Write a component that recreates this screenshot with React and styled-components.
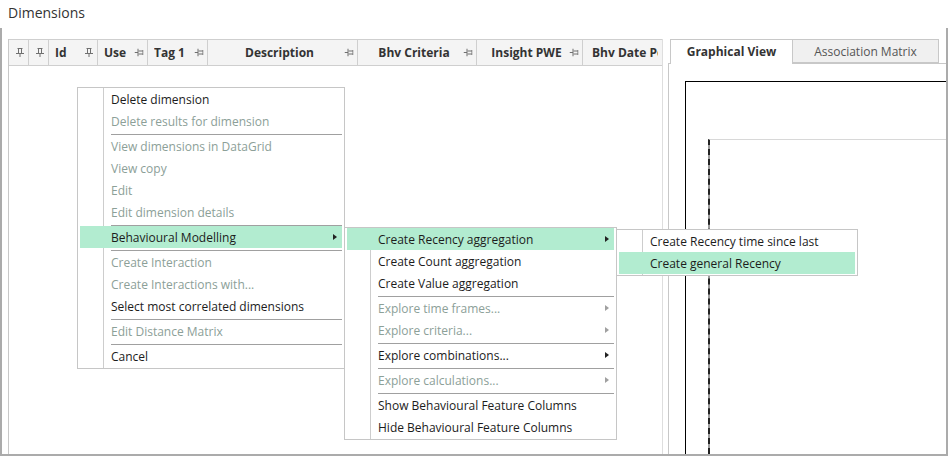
import React from 'react';
import styled, { createGlobalStyle } from 'styled-components';

const GlobalStyle = createGlobalStyle`
  html, body { margin: 0; padding: 0; background: #fff; }
  body {
    font-family: "Open Sans", "Noto Sans", "Liberation Sans", sans-serif;
    font-size: 12px;
    color: #1c1c1c;
  }
  * { box-sizing: border-box; }
`;

const Window = styled.div`
  position: relative;
  width: 948px;
  height: 456px;
  overflow: hidden;
  display: flex;
  flex-direction: column;
  background: #fff;
`;

const TitleBar = styled.div`
  height: 28px;
  flex: none;
  padding-left: 8px;
  font-size: 14px;
  line-height: 25px;
  color: #333;
`;

const Frame = styled.div`
  flex: 1;
  min-height: 0;
  display: flex;
  border: 2px solid #ababab;
  border-top: none;
  padding: 11px 0 0 6px;
  overflow: hidden;
`;

const Grid = styled.div`
  width: 655px;
  flex: none;
  display: flex;
  flex-direction: column;
  border-left: 1px solid #c8c8c8;
  border-right: 1px solid #dedede;
`;

const HeaderRow = styled.div`
  display: flex;
  height: 27px;
  background: #f4f4f4;
  border-top: 1px solid #cfcfcf;
  border-bottom: 1px solid #cfcfcf;
`;

const HeaderCell = styled.div`
  flex: ${p => (p.$width ? `0 0 ${p.$width}px` : '1 1 0')};
  min-width: 0;
  display: flex;
  align-items: center;
  padding: 0 4px 0 ${p => p.$pl ?? 6}px;
  border-right: ${p => (p.$last ? 'none' : '1px solid #cfcfcf')};
  overflow: hidden;
`;

const HeaderLabel = styled.span`
  flex: 1;
  min-width: 0;
  font-weight: 700;
  color: #333;
  white-space: nowrap;
  text-align: ${p => p.$align || 'left'};
  overflow: hidden;
`;

const PinSvg = styled.svg`
  flex: none;
  color: #707070;
  transform: ${p => (p.$horizontal ? 'rotate(90deg)' : 'none')};
`;

const Pin = ({ horizontal }) => (
  <PinSvg width="8" height="9" viewBox="0 0 8 9" $horizontal={horizontal}>
    <line x1="1.5" y1="0.5" x2="6.5" y2="0.5" stroke="currentColor" />
    <line x1="2.5" y1="0.5" x2="2.5" y2="5" stroke="currentColor" />
    <line x1="5.5" y1="0.5" x2="5.5" y2="5" stroke="currentColor" />
    <line x1="0" y1="5.5" x2="8" y2="5.5" stroke="currentColor" />
    <line x1="4" y1="5.5" x2="4" y2="9" stroke="currentColor" />
  </PinSvg>
);

const GridBody = styled.div`
  flex: 1;
  background: #fff;
`;

const RightPanel = styled.div`
  flex: 1;
  min-width: 0;
  margin-left: 5px;
  display: flex;
  flex-direction: column;
`;

const TabStrip = styled.div`
  height: 24px;
  flex: none;
  display: flex;
  align-items: flex-start;
  padding-left: 2px;
`;

const Tab = styled.div`
  position: relative;
  z-index: 1;
  width: ${p => p.$width}px;
  height: ${p => (p.$active ? 25 : 24)}px;
  border: 1px solid #c8c8c8;
  border-left: ${p => (p.$active ? '1px solid #c8c8c8' : 'none')};
  border-bottom: ${p => (p.$active ? 'none' : '1px solid #c8c8c8')};
  background: ${p => (p.$active ? '#fff' : '#f0f0f0')};
  font-weight: ${p => (p.$active ? 700 : 400)};
  color: ${p => (p.$active ? '#333' : '#555')};
  text-align: center;
  line-height: 23px;
  white-space: nowrap;
`;

const ContentPanel = styled.div`
  flex: 1;
  display: flex;
  border-left: 1px solid #c8c8c8;
  border-top: 1px solid #c8c8c8;
  padding: 17px 0 0 16px;
`;

const ChartBox = styled.div`
  flex: 1;
  display: flex;
  border-left: 1px solid #000;
  border-top: 1px solid #000;
  padding: 57px 0 0 22px;
`;

const PlotArea = styled.div`
  flex: 1;
  border-top: 1px solid #d8d8d8;
  border-left: 2px dashed #222;
  background-image: linear-gradient(to right, #9a9a9a 2px, transparent 2px);
  background-origin: border-box;
  background-clip: border-box;
  background-repeat: no-repeat;
  background-size: 2px 100%;
`;

const Menu = styled.div`
  position: absolute;
  left: ${p => p.$left}px;
  top: ${p => p.$top}px;
  width: ${p => p.$width}px;
  z-index: ${p => p.$z};
  border: 1px solid #c6c6c6;
  padding: 0 2px 1px;
  background-color: #fff;
  background-image: linear-gradient(
    to right,
    transparent 25px,
    #cdcdcd 25px,
    #cdcdcd 26px,
    transparent 26px
  );
  background-repeat: no-repeat;
`;

const MenuItem = styled.div`
  height: 22px;
  display: flex;
  align-items: center;
  justify-content: space-between;
  padding: 0 5px 0 31px;
  background: ${p => (p.$active ? '#b2ecd0' : 'transparent')};
  color: ${p => (p.$disabled ? '#8ca098' : '#1c1c1c')};
  white-space: nowrap;
`;

const Arrow = styled.span`
  width: 0;
  height: 0;
  border-left: 4px solid ${p => (p.$disabled ? '#a0a0a0' : '#222')};
  border-top: 3.5px solid transparent;
  border-bottom: 3.5px solid transparent;
`;

const Separator = styled.div`
  height: 1px;
  margin: 2px 0 0 31px;
  background: #a0a0a0;
`;

const columns = [
  { width: 20, pin: 'v' },
  { width: 20, pin: 'v' },
  { width: 49, label: 'Id', pin: 'v', pl: 6 },
  { width: 50, label: 'Use', pin: 'h', pl: 6 },
  { width: 60, label: 'Tag 1', pin: 'h', pl: 6 },
  { width: 150, label: 'Description', pin: 'h', align: 'center' },
  { width: 119, label: 'Bhv Criteria', pin: 'h', align: 'center' },
  { width: 106, label: 'Insight PWE', pin: 'h', align: 'center' },
  { label: 'Bhv Date Period', pl: 9, last: true },
];

const SEP = 'sep';

const menu1 = [
  { label: 'Delete dimension' },
  { label: 'Delete results for dimension', disabled: true },
  SEP,
  { label: 'View dimensions in DataGrid', disabled: true },
  { label: 'View copy', disabled: true },
  { label: 'Edit', disabled: true },
  { label: 'Edit dimension details', disabled: true },
  SEP,
  { label: 'Behavioural Modelling', active: true, sub: true },
  SEP,
  { label: 'Create Interaction', disabled: true },
  { label: 'Create Interactions with...', disabled: true },
  { label: 'Select most correlated dimensions' },
  SEP,
  { label: 'Edit Distance Matrix', disabled: true },
  SEP,
  { label: 'Cancel' },
];

const menu2 = [
  { label: 'Create Recency aggregation', active: true, sub: true },
  { label: 'Create Count aggregation' },
  { label: 'Create Value aggregation' },
  SEP,
  { label: 'Explore time frames...', disabled: true, sub: true },
  { label: 'Explore criteria...', disabled: true, sub: true },
  SEP,
  { label: 'Explore combinations...', sub: true },
  SEP,
  { label: 'Explore calculations...', disabled: true, sub: true },
  SEP,
  { label: 'Show Behavioural Feature Columns' },
  { label: 'Hide Behavioural Feature Columns' },
];

const menu3 = [
  { label: 'Create Recency time since last' },
  { label: 'Create general Recency', active: true },
];

const ContextMenu = ({ items, left, top, width, z }) => (
  <Menu $left={left} $top={top} $width={width} $z={z}>
    {items.map((it, i) =>
      it === SEP ? (
        <Separator key={i} />
      ) : (
        <MenuItem key={i} $active={it.active} $disabled={it.disabled}>
          <span>{it.label}</span>
          {it.sub && <Arrow $disabled={it.disabled} />}
        </MenuItem>
      )
    )}
  </Menu>
);

export default function App() {
  return (
    <>
      <GlobalStyle />
      <Window>
        <TitleBar>Dimensions</TitleBar>
        <Frame>
          <Grid>
            <HeaderRow>
              {columns.map((c, i) => (
                <HeaderCell key={i} $width={c.width} $pl={c.pl} $last={c.last}>
                  <HeaderLabel $align={c.align}>{c.label || ''}</HeaderLabel>
                  {c.pin && <Pin horizontal={c.pin === 'h'} />}
                </HeaderCell>
              ))}
            </HeaderRow>
            <GridBody />
          </Grid>
          <RightPanel>
            <TabStrip>
              <Tab $active $width={123}>Graphical View</Tab>
              <Tab $width={146}>Association Matrix</Tab>
            </TabStrip>
            <ContentPanel>
              <ChartBox>
                <PlotArea />
              </ChartBox>
            </ContentPanel>
          </RightPanel>
        </Frame>
        <ContextMenu items={menu1} left={77} top={87} width={268} z={10} />
        <ContextMenu items={menu2} left={344} top={227} width={273} z={11} />
        <ContextMenu items={menu3} left={616} top={229} width={242} z={12} />
      </Window>
    </>
  );
}
